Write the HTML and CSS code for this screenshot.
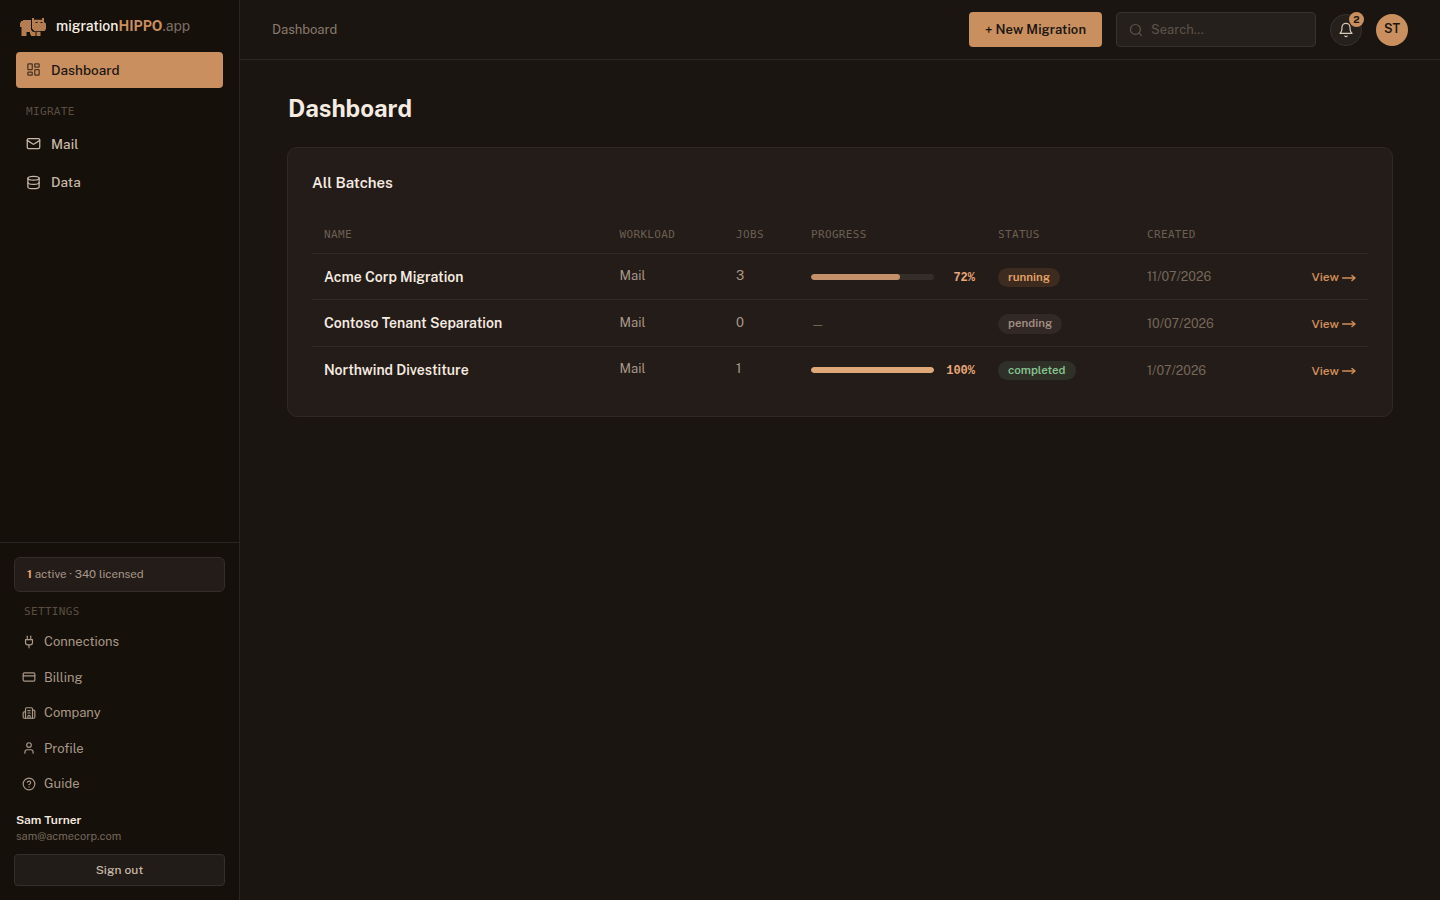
FILE: index.html
```html
<!DOCTYPE html>
<html lang="en">
<head>
<meta charset="utf-8">
<title>Dashboard – migrationHIPPO.app</title>
<link rel="stylesheet" href="styles.css">
</head>
<body>
<div class="app">
  <aside class="sidebar">
    <div class="brand">
      <svg class="logo" width="28" height="20" viewBox="0 0 28 20">
        <defs><pattern id="weave" width="3" height="3" patternUnits="userSpaceOnUse"><rect width="3" height="3" fill="#c08658"/><path fill="#a8754c" d="M0 0h1.500v1.500H0zM1.500 1.500H3V3H1.500z"/></pattern></defs>
        <path fill="url(#weave)" d="M4 3h8v9.500l2 2.300h7.500V19H17.500v-4h-1v4H12v-1.500h-1V15H7.500v4H2.500v-9H1V5.500h1V4h2z"/>
        <path fill="url(#weave)" d="M13 1h2v1.700h8V1h2v4l2 1.800V12l-1.500 2H15l-2-2.200z"/>
        <path fill="#15100a" d="M12 4h1v7.800l2 2.200v.8h-1l-2-2.300zM16.500 5h2v1h-2zM21.500 5h2v1h-2z"/>
      </svg>
      <span class="brand-name">migration<b>HIPPO</b><i>.app</i></span>
    </div>
    <nav class="nav">
      <a class="nav-item active"><svg class="i15" viewBox="0 0 24 24"><rect x="3" y="3" width="7" height="9" rx="1"/><rect x="14" y="3" width="7" height="5" rx="1"/><rect x="14" y="12" width="7" height="9" rx="1"/><rect x="3" y="16" width="7" height="5" rx="1"/></svg><span>Dashboard</span></a>
      <div class="section-label">MIGRATE</div>
      <a class="nav-item"><svg class="i15" viewBox="0 0 24 24"><rect x="2" y="4" width="20" height="16" rx="2"/><path d="m22 7-8.970 5.700a1.940 1.940 0 0 1-2.060 0L2 7"/></svg><span>Mail</span></a>
      <a class="nav-item"><svg class="i15 data-icon" viewBox="0 0 24 24"><ellipse cx="12" cy="5" rx="9" ry="3"/><path d="M3 5v14a9 3 0 0 0 18 0V5"/><path d="M3 12a9 3 0 0 0 18 0"/></svg><span>Data</span></a>
    </nav>
    <div class="side-foot">
      <div class="license"><b>1</b> active · 340 licensed</div>
      <div class="section-label settings-label">SETTINGS</div>
      <nav class="settings">
        <a><svg class="i14" viewBox="0 0 24 24"><path d="M12 22v-5"/><path d="M9 8V2"/><path d="M15 8V2"/><path d="M18 8v5a4 4 0 0 1-4 4h-4a4 4 0 0 1-4-4V8Z"/></svg><span>Connections</span></a>
        <a><svg class="i14" viewBox="0 0 24 24"><rect x="2" y="5" width="20" height="14" rx="2"/><path d="M2 10h20"/></svg><span>Billing</span></a>
        <a><svg class="i14" viewBox="0 0 24 24"><path d="M10 12h4M10 8h4M14 21v-3a2 2 0 0 0-4 0v3"/><path d="M6 10H4a2 2 0 0 0-2 2v7a2 2 0 0 0 2 2h16a2 2 0 0 0 2-2V9a2 2 0 0 0-2-2h-2"/><path d="M6 21V5a2 2 0 0 1 2-2h8a2 2 0 0 1 2 2v16"/></svg><span>Company</span></a>
        <a><svg class="i14" viewBox="0 0 24 24"><path d="M19 21v-2a4 4 0 0 0-4-4H9a4 4 0 0 0-4 4v2"/><circle cx="12" cy="7" r="4"/></svg><span>Profile</span></a>
        <a><svg class="i14" viewBox="0 0 24 24"><circle cx="12" cy="12" r="10"/><path d="M9.090 9a3 3 0 0 1 5.830 1c0 2-3 3-3 3"/><path d="M12 17h.01"/></svg><span>Guide</span></a>
      </nav>
      <div class="user-name">Sam Turner</div>
      <div class="user-mail">sam@acmecorp.com</div>
      <button class="signout">Sign out</button>
    </div>
  </aside>
  <div class="main">
    <header class="topbar">
      <span class="crumb">Dashboard</span>
      <button class="new-btn">+ New Migration</button>
      <div class="search"><svg class="i14" viewBox="0 0 24 24"><circle cx="11" cy="11" r="8.500"/><path d="m21.500 21.500-4.400-4.400"/></svg><span>Search...</span></div>
      <div class="bell"><svg class="i16" viewBox="0 0 24 24"><path d="M6 8a6 6 0 0 1 12 0c0 7 3 9 3 9H3s3-2 3-9"/><path d="M10.300 21a1.940 1.940 0 0 0 3.400 0"/></svg><span class="badge">2</span></div>
      <div class="avatar">ST</div>
    </header>
    <main class="content">
      <h1>Dashboard</h1>
      <section class="card">
        <h2>All Batches</h2>
        <div class="table">
          <div class="row head"><span>NAME</span><span>WORKLOAD</span><span>JOBS</span><span>PROGRESS</span><span>STATUS</span><span>CREATED</span><span></span></div>
          <div class="row">
            <span class="name">Acme Corp Migration</span><span class="cell">Mail</span><span class="cell">3</span>
            <span class="progress"><span class="track"><span class="fill" style="width:72%"></span></span><span class="pct">72%</span></span>
            <span class="status"><span class="pill running">running</span></span><span class="date">11/07/2026</span>
            <a class="view">View <svg width="14" height="8" viewBox="0 0 14 8"><path d="M0.500 4h12.500M10 1.500 13 4 10 6.500"/></svg></a>
          </div>
          <div class="row second">
            <span class="name">Contoso Tenant Separation</span><span class="cell">Mail</span><span class="cell">0</span>
            <span class="dash">—</span>
            <span class="status"><span class="pill pending">pending</span></span><span class="date">10/07/2026</span>
            <a class="view">View <svg width="14" height="8" viewBox="0 0 14 8"><path d="M0.500 4h12.500M10 1.500 13 4 10 6.500"/></svg></a>
          </div>
          <div class="row last">
            <span class="name">Northwind Divestiture</span><span class="cell">Mail</span><span class="cell">1</span>
            <span class="progress"><span class="track"><span class="fill done" style="width:100%"></span></span><span class="pct">100%</span></span>
            <span class="status"><span class="pill completed">completed</span></span><span class="date">1/07/2026</span>
            <a class="view">View <svg width="14" height="8" viewBox="0 0 14 8"><path d="M0.500 4h12.500M10 1.500 13 4 10 6.500"/></svg></a>
          </div>
        </div>
      </section>
    </main>
  </div>
</div>
</body>
</html>
```
FILE: styles.css
```css
* { box-sizing: border-box; }
body { margin: 0; background: #1a1511; color: #f5ebe0; font-family: "Public Sans", Inter, "Liberation Sans", sans-serif; font-size: 13px; }
h1, h2 { margin: 0; }
button { font: inherit; padding: 0; }
svg { flex: none; fill: none; stroke: currentColor; stroke-width: 2; stroke-linecap: round; stroke-linejoin: round; }
.i14 { width: 14px; height: 14px; }
.i15 { width: 15px; height: 15px; margin-top: -1px; }
.i15.data-icon { margin-top: 0; }
.i16 { width: 16px; height: 16px; stroke-width: 1.8; }
.app { display: grid; grid-template-columns: 240px 1fr; height: 900px; overflow: hidden; }

.sidebar { display: flex; flex-direction: column; background: #15100a; border-right: 1px solid #2a2520; }
.brand { display: flex; align-items: center; gap: 9px; height: 52px; padding: 0 0 0 19px; }
.logo { stroke: none; margin-top: 2px; }
.brand-name { font-size: 14px; font-weight: 500; line-height: 20px; color: #fbf1e6; }
.brand-name b { font-weight: 700; color: #c98f5e; }
.brand-name i { font-style: normal; font-weight: 400; color: #7d6e61; }
.nav { display: flex; flex-direction: column; padding: 0 16px; }
.nav-item { display: flex; align-items: center; gap: 10px; height: 36px; margin-bottom: 2px; padding-left: 10px; border-radius: 4px; font-weight: 500; font-size: 13.5px; letter-spacing: 0.06px; color: #c9b8a8; }
.nav-item.active { color: #1a1511; background: #c98f5e; margin-bottom: 0; }
.nav-item.active svg { opacity: 0.75; }
.section-label { font: 11px/14px "DejaVu Sans Mono", monospace; letter-spacing: 0.34px; color: #5a4e43; padding: 17px 10px 7px; }
.side-foot { margin-top: auto; height: 358px; border-top: 1px solid #2a2520; padding: 14px 14px 0; }
.license { height: 35px; padding-left: 12px; line-height: 32px; border: 1px solid #352d28; border-radius: 6px; background: #241c18; color: #a89888; font-size: 11.5px; }
.license b { color: #e8a468; font-weight: 700; }
.settings-label { padding: 13px 10px 5px; }
.settings { display: flex; flex-direction: column; padding-left: 8px; }
.settings a { display: flex; align-items: center; gap: 8px; height: 35.5px; color: #a89888; }
.user-name { margin-top: 10px; padding-left: 2px; font-size: 12px; line-height: 16px; font-weight: 600; }
.user-mail { padding-left: 2px; font-size: 11px; line-height: 16px; color: #75675a; }
.signout { display: block; width: 100%; height: 32px; margin-top: 10px; border: 1px solid #352f2a; border-radius: 4px; background: #211c17; color: #c9b8a8; font-size: 12px; letter-spacing: 0.1px; font-weight: 500; }

.topbar { display: flex; align-items: center; height: 60px; padding: 0 32px; border-bottom: 1px solid #2c2723; }
.crumb { margin-right: auto; color: #8a7a6c; }
.new-btn { width: 133px; height: 35px; border: 0; border-radius: 4px; background: #c98f5e; color: #1a1511; font-weight: 600; letter-spacing: 0.1px; }
.search { display: flex; align-items: center; gap: 8px; width: 200px; height: 35px; margin: 0 14px; padding-left: 12px; border: 1px solid #37322e; border-radius: 4px; background: #25201c; color: #5e534a; }
.bell { position: relative; display: grid; place-items: center; width: 32px; height: 32px; margin-right: 14px; border: 1px solid #37322e; border-radius: 50%; background: #25201c; color: #d8c9ba; }
.badge { position: absolute; top: -3px; right: -3px; width: 15px; height: 15px; border-radius: 50%; background: #c98f5e; color: #1a1511; font-size: 10px; line-height: 15px; font-weight: 700; text-align: center; }
.avatar { width: 32px; height: 32px; border-radius: 50%; background: #c98f5e; color: #1a1511; font-size: 12.5px; line-height: 30px; font-weight: 600; text-align: center; }

.content { padding: 32px 47px; }
h1 { font-size: 24px; line-height: 32px; font-weight: 700; padding-left: 1px; }
.card { height: 270px; margin-top: 23px; padding: 24px; border: 1px solid #302824; border-radius: 10px; background: #241c18; }
h2 { font-size: 15px; line-height: 22px; font-weight: 600; }
.table { margin-top: 21px; }
.row { display: grid; grid-template-columns: 295.5px 116.5px 75px 187px 149px 1fr auto; align-items: center; height: 46px; padding: 0 12px; border-bottom: 1px solid #322827; }
.row.head { height: 39px; font: 11px/14px "DejaVu Sans Mono", monospace; letter-spacing: 0.34px; color: #6c5f53; }
.row.head span { padding-top: 1px; }
.row.second { height: 47px; }
.row.last { border: 0; height: 46px; }
.name { font-weight: 600; font-size: 14px; line-height: 17px; padding-top: 1px; }
.second .name, .last .name { padding-top: 1px; }
.cell { color: #a89888; padding-bottom: 2px; }
.last .cell { padding-bottom: 4px; }
.progress { display: flex; align-items: center; justify-content: space-between; padding-right: 23px; }
.track { width: 123px; height: 6px; border-radius: 3px; background: #352d28; overflow: hidden; }
.fill { display: block; height: 6px; border-radius: 3px; background: #c4916a; }
.fill.done { background: #dfa878; }
.pct { font: 700 12px/16px "Liberation Mono", monospace; color: #e8a878; padding-top: 2px; }
.dash { color: #75614f; padding: 2px 0 0; font-size: 12px; }
.status { display: flex; padding-top: 1px; }
.pill { height: 19px; line-height: 18px; padding: 0 10px; border-radius: 10px; font-size: 11.5px; font-weight: 600; }
.running { background: #3e2b20; color: #e8a468; }
.pending { height: 20px; background: #322826; color: #a08f82; }
.completed { background: #2f3027; color: #84c28e; }
.date { color: #75675a; font-size: 12.5px; }
.view { display: flex; align-items: center; gap: 3px; padding-top: 1px; font-size: 12px; font-weight: 600; color: #d08d58; }
.view svg { stroke-width: 1.5; margin-top: 1px; }
```
